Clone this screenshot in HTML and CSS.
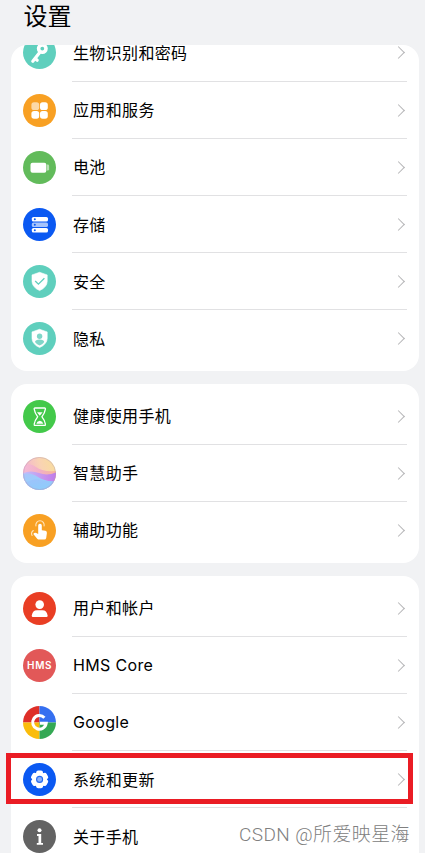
FILE: index.html
```html
<!DOCTYPE html>
<html lang="zh-CN">
<head>
  <meta charset="UTF-8">
  <meta name="viewport" content="width=device-width, initial-scale=1">
  <title>设置</title>
  <link rel="stylesheet" href="styles.css">
</head>
<body>
  <div class="phone">
    <h1>设置</h1>

    <div class="card card-scrolled">
      <div class="row">
        <svg class="icon" viewBox="0 0 33 33">
          <circle cx="16.5" cy="16.5" r="16.5" fill="#5fcfbd"/>
          <circle cx="19.3" cy="12.6" r="3.7" fill="none" stroke="#fff" stroke-width="3.6"/>
          <path d="M16.3 17L9.8 25.3M12.2 22.5l2 1.7" fill="none" stroke="#fff" stroke-width="3.2" stroke-linecap="round"/>
        </svg>
        <div class="label"><span>生物识别和密码</span><i class="arrow"></i></div>
      </div>
      <div class="row">
        <svg class="icon" viewBox="0 0 33 33">
          <circle cx="16.5" cy="16.5" r="16.5" fill="#f8a023"/>
          <rect x="8.4" y="8.2" width="7.8" height="7.8" rx="2.6" fill="#fcd9a7"/>
          <rect x="17" y="8.2" width="7.8" height="7.8" rx="2.6" fill="#fff"/>
          <rect x="8.4" y="16.9" width="7.8" height="7.8" rx="2.6" fill="#fff"/>
          <rect x="17" y="16.9" width="7.8" height="7.8" rx="2.6" fill="#fff"/>
        </svg>
        <div class="label"><span>应用和服务</span><i class="arrow"></i></div>
      </div>
      <div class="row">
        <svg class="icon" viewBox="0 0 33 33">
          <circle cx="16.5" cy="16.5" r="16.5" fill="#62bb5b"/>
          <rect x="7.5" y="11.7" width="15.8" height="10" rx="2" fill="#fff"/>
          <path d="M23.7 13.6h1q1.4 0 1.4 1.4v3.2q0 1.4-1.4 1.4h-1z" fill="#b9e0b5"/>
        </svg>
        <div class="label"><span>电池</span><i class="arrow"></i></div>
      </div>
      <div class="row">
        <svg class="icon" viewBox="0 0 33 33">
          <circle cx="16.5" cy="16.5" r="16.5" fill="#0b59f2"/>
          <rect x="8.8" y="8.9" width="16.2" height="4.7" rx="1.7" fill="#fff"/>
          <rect x="8.8" y="14.4" width="16.2" height="4.7" rx="1.7" fill="#a6c4fb"/>
          <rect x="8.8" y="19.9" width="16.2" height="4.7" rx="1.7" fill="#fff"/>
          <g fill="#0b59f2"><circle cx="11.8" cy="11.2" r="1"/><circle cx="11.8" cy="16.7" r="1"/><circle cx="11.8" cy="22.2" r="1"/></g>
        </svg>
        <div class="label"><span>存储</span><i class="arrow"></i></div>
      </div>
      <div class="row">
        <svg class="icon" viewBox="0 0 33 33">
          <circle cx="16.5" cy="16.5" r="16.5" fill="#5fcfbd"/>
          <path d="M16.6 7.3l7.6 2.6v6.4q0 5.8-7.6 9.3-7.6-3.5-7.6-9.3V9.9z" fill="#fff" stroke="#fff" stroke-width=".6" stroke-linejoin="round"/>
          <path d="M12.2 16l3.2 3.1 6-5.8" fill="none" stroke="#5fcfbd" stroke-width="1.3"/>
        </svg>
        <div class="label"><span>安全</span><i class="arrow"></i></div>
      </div>
      <div class="row">
        <svg class="icon" viewBox="0 0 33 33">
          <circle cx="16.5" cy="16.5" r="16.5" fill="#5fcfbd"/>
          <path d="M16.6 7.3l7.6 2.6v6.4q0 5.8-7.6 9.3-7.6-3.5-7.6-9.3V9.9z" fill="#fff" stroke="#fff" stroke-width=".6" stroke-linejoin="round"/>
          <circle cx="16.6" cy="14.2" r="2.7" fill="#7fd6c8"/>
          <path d="M12 20q.3-2.6 4.6-2.6t4.6 2.6q-1.3 2.3-4.6 3.5Q13.3 22.3 12 20z" fill="#7fd6c8"/>
        </svg>
        <div class="label"><span>隐私</span><i class="arrow"></i></div>
      </div>
    </div>

    <div class="card">
      <div class="row">
        <svg class="icon" viewBox="0 0 33 33">
          <circle cx="16.5" cy="16.5" r="16.5" fill="#43c94a"/>
          <path d="M12 8h9.6q1 0 .8 1.2c-.5 3.8-1.5 5-3.5 7.5 2 2.5 3 3.7 3.5 7.5q.2 1.2-.8 1.2H12q-1 0-.8-1.2c.5-3.8 1.5-5 3.5-7.5-2-2.5-3-3.7-3.5-7.5Q11 8 12 8z" fill="none" stroke="#fff" stroke-width="1.3" stroke-linejoin="round"/>
          <path d="M14 12.2h5.6l-2.8 3.5zM13.4 23.7q.4-2.4 3.4-3 3 .6 3.4 3z" fill="#fff"/>
        </svg>
        <div class="label"><span>健康使用手机</span><i class="arrow"></i></div>
      </div>
      <div class="row">
        <svg class="icon" viewBox="0 0 33 33">
          <defs>
            <linearGradient id="warm" x1="0" y1=".3" x2="1" y2="0">
              <stop offset="0" stop-color="#f3b3cf"/>
              <stop offset=".5" stop-color="#f9d3b4"/>
              <stop offset="1" stop-color="#f8df98"/>
            </linearGradient>
            <linearGradient id="pink" x1="0" y1="0" x2="1" y2="0">
              <stop offset="0" stop-color="#f5bad6"/>
              <stop offset=".55" stop-color="#f2b0c4"/>
              <stop offset="1" stop-color="#f7b796"/>
            </linearGradient>
            <linearGradient id="violet" x1="0" y1="0" x2="1" y2="0">
              <stop offset="0" stop-color="#c3c0f8"/>
              <stop offset=".6" stop-color="#c695ee"/>
              <stop offset="1" stop-color="#c07bea"/>
            </linearGradient>
            <linearGradient id="cool" x1=".2" y1="0" x2=".6" y2="1">
              <stop offset="0" stop-color="#a9c5fb"/>
              <stop offset="1" stop-color="#88dafb"/>
            </linearGradient>
            <clipPath id="ball"><circle cx="16.5" cy="16.5" r="16.5"/></clipPath>
          </defs>
          <g clip-path="url(#ball)">
            <path d="M0 0h33v33H0z" fill="url(#warm)"/>
            <path d="M0 9q7-4 13 1t20 4v10H0z" fill="url(#pink)"/>
            <path d="M0 16q8-3 16 0t17-.5V33H0z" fill="url(#violet)"/>
            <path d="M0 17q8-2 15 3t18 4v9H0z" fill="url(#cool)"/>
            <path d="M0 27q10-6 18-4t15 1q-7 10-17 11z" fill="#9aa9fa" opacity=".25"/>
          </g>
          <circle cx="16.5" cy="16.5" r="16.1" fill="none" stroke="#b49bb9" stroke-width=".8" opacity=".5"/>
        </svg>
        <div class="label"><span>智慧助手</span><i class="arrow"></i></div>
      </div>
      <div class="row">
        <svg class="icon" viewBox="0 0 33 33">
          <circle cx="16.5" cy="16.5" r="16.5" fill="#f8a023"/>
          <path d="M15.2 11.6a1.8 1.8 0 0 1 3.6 0v4.6l3.6.6q1.7.4 1.5 2.2l-.7 5.1q-.3 1.5-1.8 1.5h-5.2q-1.2 0-2-.9l-3.9-4.7q1.2-1.7 3-.9l1.9 1z" fill="#fff"/>
          <path d="M12.9 11.9a4.2 4.2 0 1 1 8.2 0M10.3 16.5q-2.8 2.2-1.2 5" fill="none" stroke="#ffe5bc" stroke-width="1.1" stroke-linecap="round"/>
        </svg>
        <div class="label"><span>辅助功能</span><i class="arrow"></i></div>
      </div>
    </div>

    <div class="card card-last">
      <div class="row">
        <svg class="icon" viewBox="0 0 33 33">
          <circle cx="16.5" cy="16.5" r="16.5" fill="#e93e24"/>
          <circle cx="16.7" cy="12.6" r="4.3" fill="#fff"/>
          <path d="M9.9 25q-1.3 0-1.1-1.5.8-5.2 5.2-5.2h5.4q4.4 0 5.2 5.2.2 1.5-1.1 1.5z" fill="#fff"/>
        </svg>
        <div class="label"><span>用户和帐户</span><i class="arrow"></i></div>
      </div>
      <div class="row">
        <svg class="icon" viewBox="0 0 33 33">
          <circle cx="16.5" cy="16.5" r="16.5" fill="#e25858"/>
          <text class="hms" x="4" y="20">HMS</text>
        </svg>
        <div class="label"><span>HMS Core</span><i class="arrow"></i></div>
      </div>
      <div class="row">
        <svg class="icon" viewBox="0 0 33 33">
          <path d="M16.5 16.5V0A16.5 16.5 0 0 0 0 16.5z" fill="#de2f28"/>
          <path d="M16.5 16.5V0A16.5 16.5 0 0 1 33 16.5z" fill="#356ff0"/>
          <path d="M16.5 16.5H0A16.5 16.5 0 0 0 16.5 33z" fill="#fabc0b"/>
          <path d="M16.5 16.5H33A16.5 16.5 0 0 1 16.5 33z" fill="#34a854"/>
          <path d="M21.4 11.7A6.8 6.8 0 1 0 23.2 17.3H17" fill="none" stroke="#fff" stroke-width="3"/>
        </svg>
        <div class="label"><span>Google</span><i class="arrow"></i></div>
      </div>
      <div class="row">
        <svg class="icon" viewBox="0 0 33 33">
          <circle cx="16.5" cy="16.5" r="16.5" fill="#0b59f2"/>
          <g fill="#fff">
            <circle cx="16.6" cy="16.4" r="7.4"/>
            <rect x="13.2" y="7.6" width="6.8" height="17.6" rx="2"/>
            <rect x="13.2" y="7.6" width="6.8" height="17.6" rx="2" transform="rotate(60 16.6 16.4)"/>
            <rect x="13.2" y="7.6" width="6.8" height="17.6" rx="2" transform="rotate(120 16.6 16.4)"/>
          </g>
          <circle cx="16.6" cy="16.4" r="3" fill="#8ab1fa" stroke="#2469ee" stroke-width="1.1"/>
        </svg>
        <div class="label"><span>系统和更新</span><i class="arrow"></i></div>
        <div class="highlight"></div>
      </div>
      <div class="row">
        <svg class="icon" viewBox="0 0 33 33">
          <circle cx="16.5" cy="16.5" r="16.5" fill="#636363"/>
          <circle cx="16.5" cy="10.3" r="2" fill="#fff"/>
          <path d="M14 14h4.2v8.9H20v1.9h-6.2v-1.9h1.7v-7H14z" fill="#fff"/>
        </svg>
        <div class="label"><span>关于手机</span><i class="arrow"></i></div>
      </div>
    </div>

    <div class="watermark">CSDN @所爱映星海</div>
  </div>
</body>
</html>
```

FILE: styles.css
```css
body {
  margin: 0;
  background-color: #f1f2f4;
  font-family: Inter, "Noto Sans CJK SC", sans-serif;
  color: #000;
}

.phone {
  position: relative;
  height: 853px;
  overflow: hidden;
}

h1 {
  box-sizing: border-box;
  height: 45px;
  margin: 0;
  padding-left: 23.5px;
  font-size: 24px;
  line-height: 33px;
  font-weight: 400;
}

.card {
  box-sizing: border-box;
  width: 408px;
  height: 179px;
  margin: 0 0 13px 11px;
  padding: 3.5px 12px 0;
  background-color: #fff;
  border-radius: 16px;
}

/* first card is scrolled partly under the title */
.card-scrolled {
  display: flex;
  flex-direction: column;
  justify-content: flex-end;
  height: 326px;
  padding: 0 12px 3.5px;
  overflow: hidden;
}

.card-last {
  height: 300px;
}

.row {
  position: relative;
  display: flex;
  flex-shrink: 0;
  align-items: center;
  gap: 16px;
  height: 57.2px;
}

.icon {
  flex-shrink: 0;
  width: 33px;
  height: 33px;
}

.label {
  display: flex;
  box-sizing: border-box;
  flex: 1;
  align-items: center;
  justify-content: space-between;
  height: 100%;
  padding: 1px 4px 0 1px;
  border-bottom: 1px solid #e1e1e3;
  font-size: 16px;
  line-height: 14px;
  letter-spacing: 0.35px;
}

.row:last-child .label {
  border-bottom-color: transparent;
}

.arrow {
  width: 8px;
  height: 8px;
  border-top: 1.5px solid #b5b5b7;
  border-right: 1.5px solid #b5b5b7;
  transform: rotate(45deg);
}

.hms {
  font-family: Inter, sans-serif;
  font-size: 10px;
  font-weight: 600;
  letter-spacing: 0.7px;
  fill: #fff;
}

.highlight {
  position: absolute;
  top: 2px;
  left: -17px;
  box-sizing: border-box;
  width: 407px;
  height: 51px;
  border: 5px solid #ea1c24;
}

.watermark {
  position: absolute;
  right: 15px;
  bottom: 4px;
  font-family: Roboto, "Noto Sans CJK SC", sans-serif;
  font-size: 19px;
  font-weight: 300;
  line-height: 28px;
  letter-spacing: 0.4px;
  color: #808080;
  white-space: nowrap;
}
```
